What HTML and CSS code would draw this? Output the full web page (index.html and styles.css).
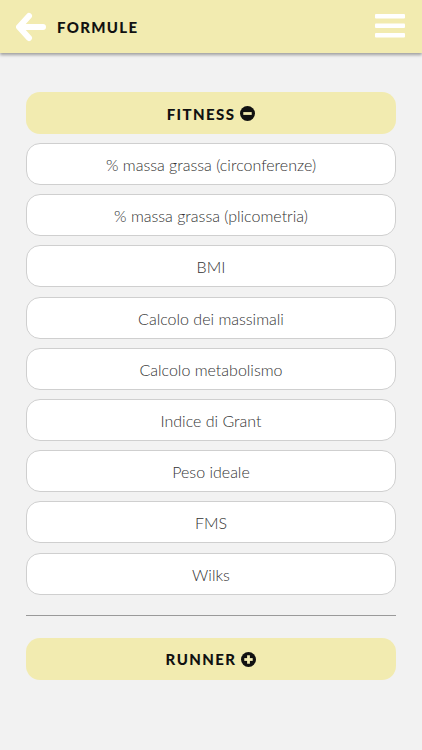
FILE: index.html
```html
<!DOCTYPE html>
<html>
<head>
<meta charset="utf-8">
<link rel="stylesheet" href="styles.css">
</head>
<body>
<header class="topbar">
  <div class="left">
    <svg class="back" width="30" height="30" viewBox="0 0 30 30"><path d="M13 4 L3 15 L13 26 M4 15 H27" fill="none" stroke="#fff" stroke-width="6" stroke-linecap="round" stroke-linejoin="round"/></svg>
    <span class="title">FORMULE</span>
  </div>
  <svg class="menu" width="30" height="26" viewBox="0 0 30 26"><rect x="0" y="1" width="30" height="4.5" rx="1" fill="#fff"/><rect x="0" y="10.5" width="30" height="4.5" rx="1" fill="#fff"/><rect x="0" y="20" width="30" height="4.5" rx="1" fill="#fff"/></svg>
</header>
<main class="content">
  <div class="section-btn">FITNESS
    <svg width="15" height="15" viewBox="0 0 16 16"><circle cx="8" cy="8" r="8" fill="#111"/><rect x="3.5" y="6.5" width="9" height="3" fill="#f2ebb0"/></svg>
  </div>
  <div class="list">
    <div class="item">% massa grassa (circonferenze)</div>
    <div class="item">% massa grassa (plicometria)</div>
    <div class="item">BMI</div>
    <div class="item">Calcolo dei massimali</div>
    <div class="item">Calcolo metabolismo</div>
    <div class="item">Indice di Grant</div>
    <div class="item">Peso ideale</div>
    <div class="item">FMS</div>
    <div class="item">Wilks</div>
  </div>
  <hr class="divider">
  <div class="section-btn">RUNNER
    <svg width="15" height="15" viewBox="0 0 16 16"><circle cx="8" cy="8" r="8" fill="#111"/><rect x="3.5" y="6.5" width="9" height="3" fill="#f2ebb0"/><rect x="6.5" y="3.5" width="3" height="9" fill="#f2ebb0"/></svg>
  </div>
</main>
</body>
</html>
```
FILE: styles.css
```css
* { box-sizing: border-box; }
html, body { margin: 0; padding: 0; }
body {
  background: #f2f2f2;
  font-family: "Lato", "Open Sans", sans-serif;
  width: 422px;
  height: 750px;
  overflow: hidden;
}
.topbar {
  height: 53px;
  background: #f2ebb0;
  display: flex;
  align-items: center;
  justify-content: space-between;
  padding: 0 17px 0 16px;
  box-shadow: 0 2px 3px rgba(0,0,0,0.35);
}
.left { display: flex; align-items: center; gap: 11px; }
.back { display: block; margin-top: 1px; }
.title {
  font-weight: 900;
  font-size: 15px;
  letter-spacing: 1.3px;
  color: #111;
}
.menu { display: block; margin-top: -1px; }
.content {
  padding: 39px 26px 0 26px;
}
.section-btn {
  height: 42px;
  border-radius: 14px;
  background: #f2ebb0;
  display: flex;
  align-items: center;
  justify-content: center;
  gap: 5px;
  font-weight: 900;
  font-size: 15px;
  letter-spacing: 1.4px;
  color: #111;
  padding-top: 1px;
}
.section-btn svg { display: block; }
.list {
  display: flex;
  flex-direction: column;
  gap: 9.2px;
  margin-top: 9px;
}
.item {
  height: 42px;
  border-radius: 14px;
  background: #fff;
  border: 1px solid #cfcfcf;
  display: flex;
  align-items: center;
  justify-content: center;
  font-weight: 300;
  font-size: 16px;
  color: #333;
  padding-top: 1px;
}
.divider {
  border: 0;
  border-top: 1px solid #9a9a9a;
  margin: 20px 0 22px 0;
  height: 0;
}
```
